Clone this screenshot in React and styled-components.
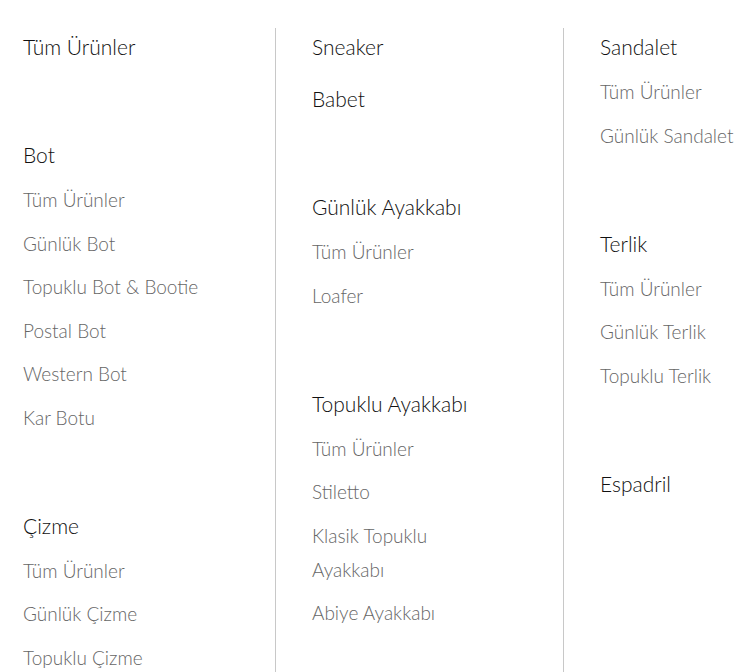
import React from 'react';
import styled, { createGlobalStyle } from 'styled-components';

const GlobalStyle = createGlobalStyle`
    html, body {
        margin: 0;
        padding: 0;
        background: #ffffff;
    }
    body {
        font-family: Lato, "Noto Sans", sans-serif;
        -webkit-font-smoothing: antialiased;
    }
`;

const Page = styled.div`
    padding-top: 28px;
    height: 644px;
    overflow: hidden;
`;

const Columns = styled.div`
    display: grid;
    grid-template-columns: 275px 288px 1fr;
    height: 100%;
`;

const Column = styled.div`
    box-sizing: border-box;
    padding: 2px 0 0 ${p => (p.$first ? '23px' : '36px')};
    border-left: ${p => (p.$first ? 'none' : '1px solid #c8c8c8')};
    display: flex;
    flex-direction: column;
`;

const Group = styled.div`
    display: flex;
    flex-direction: column;
    gap: ${p => (p.$links ? '18px' : '0')};
    margin-bottom: 74px;
`;

const Heading = styled.a`
    font-size: 21px;
    font-weight: 300;
    line-height: 34px;
    color: #111111;
    text-decoration: none;
    white-space: nowrap;
`;

const ItemList = styled.ul`
    list-style: none;
    margin: 11px 0 0;
    padding: 0;
    display: flex;
    flex-direction: column;
    gap: 9.5px;
`;

const Item = styled.li`
    font-size: 19px;
    font-weight: 300;
    line-height: 34px;
    color: #666666;
    white-space: pre-line;
`;

const columns = [
    [
        { links: ['Tüm Ürünler'] },
        {
            title: 'Bot',
            items: ['Tüm Ürünler', 'Günlük Bot', 'Topuklu Bot & Bootie', 'Postal Bot', 'Western Bot', 'Kar Botu']
        },
        {
            title: 'Çizme',
            items: ['Tüm Ürünler', 'Günlük Çizme', 'Topuklu Çizme']
        }
    ],
    [
        { links: ['Sneaker', 'Babet'] },
        { title: 'Günlük Ayakkabı', items: ['Tüm Ürünler', 'Loafer'] },
        {
            title: 'Topuklu Ayakkabı',
            items: ['Tüm Ürünler', 'Stiletto', 'Klasik Topuklu\nAyakkabı', 'Abiye Ayakkabı']
        }
    ],
    [
        { title: 'Sandalet', items: ['Tüm Ürünler', 'Günlük Sandalet'] },
        { title: 'Terlik', items: ['Tüm Ürünler', 'Günlük Terlik', 'Topuklu Terlik'] },
        { links: ['Espadril'] }
    ]
];

const MenuGroup = ({ group }) => {
    if (group.links) {
        return (
            <Group $links>
                {group.links.map(link => (
                    <Heading key={link} href="#">{link}</Heading>
                ))}
            </Group>
        );
    }

    return (
        <Group>
            <Heading href="#">{group.title}</Heading>
            <ItemList>
                {group.items.map(item => (
                    <Item key={item}>{item}</Item>
                ))}
            </ItemList>
        </Group>
    );
};

export default function App() {
    return (
        <>
            <GlobalStyle />
            <Page>
                <Columns>
                    {columns.map((groups, i) => (
                        <Column key={i} $first={i === 0}>
                            {groups.map((group, j) => (
                                <MenuGroup key={j} group={group} />
                            ))}
                        </Column>
                    ))}
                </Columns>
            </Page>
        </>
    );
}
